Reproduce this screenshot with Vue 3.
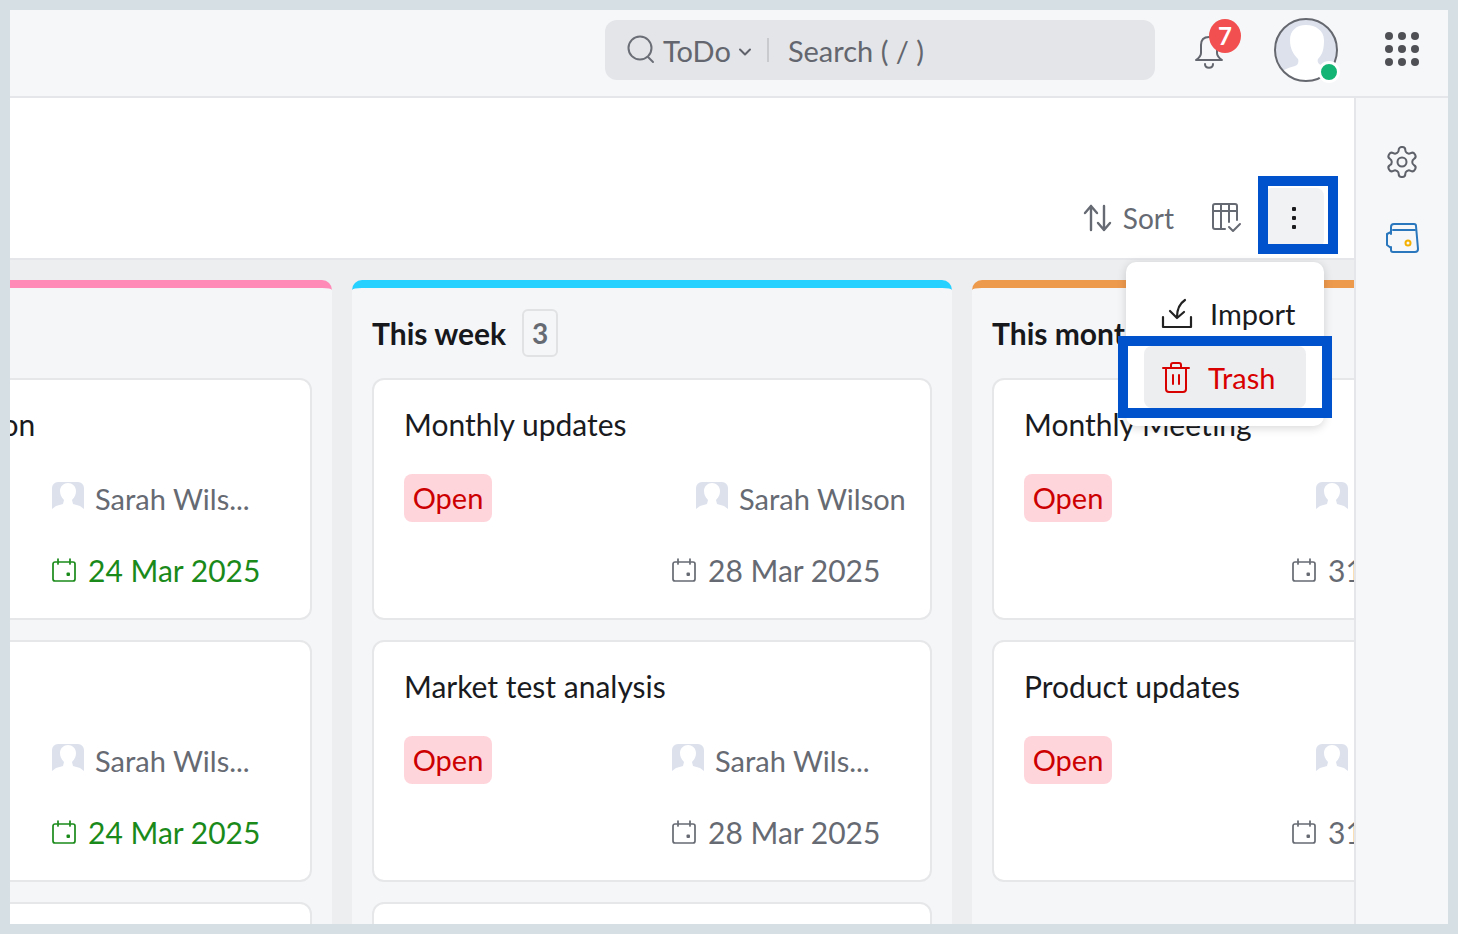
<script setup>
const columns = [
  { name: 'Today', count: 2, accent: '#ff8ab8', cards: [
    { title: 'Client presentation', user: 'Sarah Wils...', short: true, date: '24 Mar 2025', due: true },
    { title: 'Budget', user: 'Sarah Wils...', short: true, date: '24 Mar 2025', due: true },
    { title: '', user: '', date: '' } ] },
  { name: 'This week', count: 3, accent: '#26d0ff', cards: [
    { title: 'Monthly updates', user: 'Sarah Wilson', date: '28 Mar 2025' },
    { title: 'Market test analysis', user: 'Sarah Wils...', short: true, date: '28 Mar 2025' },
    { title: '', user: '', date: '' } ] },
  { name: 'This month', count: 2, accent: '#ee9a4d', cards: [
    { title: 'Monthly Meeting', user: 'Sarah Wilson', date: '31 Mar 2025' },
    { title: 'Product updates', user: 'Sarah Wilson', date: '31 Mar 2025' } ] }
]
const dots = [0, 1, 2, 3, 4, 5, 6, 7, 8]
</script>

<template>
  <div class="frame">
    <div class="app">
      <header class="topbar">
        <div class="search">
          <svg class="search-icon" width="30" height="30" viewBox="0 0 30 30" fill="none" stroke="#6b6e76" stroke-width="2" stroke-linecap="round">
            <circle cx="14" cy="13" r="11.5" /><path d="M22 22l5 5" />
          </svg>
          <span class="scope">ToDo</span>
          <svg class="chev" width="14" height="10" viewBox="0 0 14 10" fill="none" stroke="#5f626a" stroke-width="2" stroke-linecap="round" stroke-linejoin="round"><path d="M2 2.5l5 5 5-5" /></svg>
          <span class="divider"></span>
          <span class="placeholder">Search ( / )</span>
        </div>
        <div class="bell">
          <svg width="32" height="34" viewBox="0 0 32 34" fill="none" stroke="#63666e" stroke-width="2" stroke-linecap="round" stroke-linejoin="round">
            <path d="M7 10c0-5 3-8 8-8 5 0 8 3 8 8v8c0 3 2 5 5 7H2c3-2 5-4 5-7z" /><path d="M11 29c0 5 8 5 8 0" />
          </svg>
          <span class="badge">7</span>
        </div>
        <div class="avatar">
          <svg width="64" height="64" viewBox="0 0 64 64">
            <defs><clipPath id="avatar-clip"><circle cx="32" cy="32" r="31" /></clipPath></defs>
            <circle cx="32" cy="32" r="31" fill="#dce1ec" />
            <path clip-path="url(#avatar-clip)" fill="#fff" d="M32 7c-10 0-16 6-16 15 0 8 3 14 8 19 1 3 0 6-3 7-7 2-14 4-16 9v10h58V55c-3-4-10-6-16-8-3-1-4-4-3-6 5-5 6-11 6-19 0-9-8-15-18-15z" />
            <circle cx="32" cy="32" r="31" fill="none" stroke="#66686f" stroke-width="2" />
          </svg>
          <span class="online"></span>
        </div>
        <div class="apps"><i v-for="d in dots" :key="d"></i></div>
      </header>

      <div class="body">
        <main class="main">
          <div class="toolbar">
            <svg class="sort-icon" width="30" height="28" viewBox="0 0 30 28" fill="none" stroke="#666a72" stroke-width="2.4" stroke-linecap="round" stroke-linejoin="round">
              <path d="M8 26V2M2 9l6-7 6 7" /><path d="M21 2v24M15 19l6 7 6-7" />
            </svg>
            <span class="sort">Sort</span>
            <svg class="cols-icon" width="30" height="30" viewBox="0 0 30 30" fill="none" stroke="#666a72" stroke-width="2" stroke-linecap="round" stroke-linejoin="round">
              <path d="M13 26H3a2 2 0 0 1-2-2V3a2 2 0 0 1 2-2h20a2 2 0 0 1 2 2v14" /><path d="M1 8h24M9 1v25M17 1v18" /><path d="M17 24l4 4 7-7" />
            </svg>
            <button class="kebab"><i></i><i></i><i></i></button>
          </div>
          <div class="board">
            <section v-for="col in columns" :key="col.name" class="column" :style="{ borderTopColor: col.accent }">
              <div class="col-head">
                <span class="col-name">{{ col.name }}</span>
                <span class="col-count">{{ col.count }}</span>
              </div>
              <article v-for="(card, i) in col.cards" :key="i" class="card">
                <template v-if="card.title">
                  <h3 class="card-title">{{ card.title }}</h3>
                  <div class="meta">
                    <span class="pill">Open</span>
                    <div class="user" :class="{ wide: card.short }">
                      <svg width="32" height="28" viewBox="0 0 32 28">
                        <path fill="#dce1ec" d="M6 0h20a6 6 0 0 1 6 6v21l-4-3-7-2-1-4c3-3 4-6 4-9 0-5-4-8-8-8s-8 3-8 8c0 3 1 6 4 9l-1 4-7 2-4 3V6a6 6 0 0 1 6-6z" />
                      </svg>
                      <span>{{ card.user }}</span>
                    </div>
                    <div class="date" :class="{ due: card.due }">
                      <svg width="24" height="24" viewBox="0 0 24 24" fill="none" stroke="currentColor" stroke-width="1.7" stroke-linecap="round">
                        <path d="M5 4H3a2 2 0 0 0-2 2v15a2 2 0 0 0 2 2h18a2 2 0 0 0 2-2V6a2 2 0 0 0-2-2h-2" /><path d="M6 1v5M18 1v5M6 4h12" />
                        <rect x="14.5" y="14.5" width="3.5" height="3.5" rx="1" fill="currentColor" stroke="none" />
                      </svg>
                      <span>{{ card.date }}</span>
                    </div>
                  </div>
                </template>
              </article>
            </section>
          </div>
        </main>
        <aside class="side">
          <svg width="36" height="36" viewBox="0 0 24 24" fill="none" stroke="#5f626a" stroke-width="1.35" stroke-linecap="round" stroke-linejoin="round">
            <path d="M12.22 2h-.44a2 2 0 0 0-2 2v.18a2 2 0 0 1-1 1.73l-.43.25a2 2 0 0 1-2 0l-.15-.08a2 2 0 0 0-2.73.73l-.22.38a2 2 0 0 0 .73 2.73l.15.1a2 2 0 0 1 1 1.72v.51a2 2 0 0 1-1 1.74l-.15.09a2 2 0 0 0-.73 2.73l.22.38a2 2 0 0 0 2.73.73l.15-.08a2 2 0 0 1 2 0l.43.25a2 2 0 0 1 1 1.73V20a2 2 0 0 0 2 2h.44a2 2 0 0 0 2-2v-.18a2 2 0 0 1 1-1.73l.43-.25a2 2 0 0 1 2 0l.15.08a2 2 0 0 0 2.73-.73l.22-.39a2 2 0 0 0-.73-2.73l-.15-.08a2 2 0 0 1-1-1.74v-.5a2 2 0 0 1 1-1.74l.15-.09a2 2 0 0 0 .73-2.73l-.22-.38a2 2 0 0 0-2.73-.73l-.15.08a2 2 0 0 1-2 0l-.43-.25a2 2 0 0 1-1-1.73V4a2 2 0 0 0-2-2z" />
            <circle cx="12" cy="12" r="3" />
          </svg>
          <svg class="wallet" width="34" height="30" viewBox="0 0 34 30" fill="none" stroke="#2a77bd" stroke-width="2" stroke-linecap="round" stroke-linejoin="round">
            <path d="M6 11V4a3 3 0 0 1 3-3h20a2 2 0 0 1 2 2l2 23a3 3 0 0 1-3 3H8a2 2 0 0 1-2-2v-3" /><path d="M8 7h22" /><path d="M6 9L2 11v11l4 3" />
            <circle cx="23" cy="20" r="2.5" stroke="#f4b000" />
          </svg>
        </aside>
      </div>
    </div>

    <div class="menu">
      <div class="menu-item">
        <svg width="32" height="32" viewBox="0 0 32 32" fill="none" stroke="#222" stroke-width="2.2" stroke-linecap="round" stroke-linejoin="round">
          <path d="M2 20v10h28V20" /><path d="M16 20c0-7 2-13 8-17" /><path d="M9 14l7 7 7-6" />
        </svg>
        <span>Import</span>
      </div>
      <div class="menu-item trash">
        <svg width="28" height="32" viewBox="0 0 28 32" fill="none" stroke="#d90000" stroke-width="2" stroke-linecap="round" stroke-linejoin="round">
          <path d="M1 7h26M9 7V4a2 2 0 0 1 2-2h6a2 2 0 0 1 2 2v3" /><path d="M4 7v21a3 3 0 0 0 3 3h14a3 3 0 0 0 3-3V7" /><path d="M11 14v9M17 14v9" />
        </svg>
        <span>Trash</span>
      </div>
    </div>
    <div class="mark mark-kebab"></div>
    <div class="mark mark-trash"></div>
  </div>
</template>

<style>
html, body { margin: 0; }
</style>

<style scoped>
* { box-sizing: border-box; }
.frame { position: relative; width: 1458px; height: 934px; padding: 10px; background: #d6dfe4; font-family: Lato, "Liberation Sans", sans-serif; color: #1a1b1e; overflow: hidden; }
.app { width: 1438px; height: 914px; display: flex; flex-direction: column; background: #f6f7f9; overflow: hidden; }
.topbar { flex: 0 0 88px; display: flex; align-items: center; border-bottom: 2px solid #e4e6e9; }
.search { margin-left: 595px; width: 550px; height: 60px; margin-top: -6px; background: #e3e5e8; border-radius: 12px; display: flex; align-items: center; padding-left: 21px; color: #63666e; font-size: 29px; }
.search-icon { flex: none; }
.scope { margin-left: 7px; }
.chev { margin-left: 7px; margin-top: 3px; }
.divider { width: 2px; height: 24px; background: #c8cace; margin: 0 19px 0 15px; }
.bell { position: relative; margin-left: 39px; width: 32px; height: 34px; margin-top: -2px; }
.bell svg { display: block; }
.badge { position: absolute; left: 15px; top: -16px; width: 32px; height: 34px; border-radius: 50%; background: #f25050; color: #fff; font-size: 24px; font-weight: 700; text-align: center; line-height: 34px; }
.avatar { position: relative; margin-left: 48px; width: 64px; height: 64px; margin-top: -6px; }
.avatar svg { display: block; }
.online { position: absolute; right: -2px; bottom: -1px; width: 22px; height: 22px; border-radius: 50%; background: #14b574; border: 3px solid #fff; }
.apps { margin-left: 47px; width: 34px; margin-top: -8px; display: grid; grid-template-columns: repeat(3, 8px); gap: 5px; }
.apps i { width: 8px; height: 8px; border-radius: 50%; background: #4e5056; }
.body { flex: 1; min-height: 0; display: flex; }
.main { flex: 1; min-width: 0; display: flex; flex-direction: column; overflow: hidden; background: #eceef0; }
.toolbar { flex: 0 0 162px; background: #fff; border-bottom: 2px solid #e4e6e9; display: flex; justify-content: flex-end; align-items: flex-end; padding: 0 30px 10px 0; }
.sort-icon { margin-bottom: 16px; }
.sort { margin-left: 10px; margin-bottom: 13px; font-size: 28px; line-height: 34px; color: #666a72; }
.cols-icon { margin-left: 38px; margin-bottom: 15px; }
.kebab { margin-left: 22px; width: 60px; height: 60px; border: 0; border-radius: 8px; background: #f1f2f4; display: flex; flex-direction: column; align-items: center; justify-content: center; gap: 5px; padding: 0; }
.kebab i { width: 4px; height: 4px; background: #1c1c1f; border-radius: 1px; }
.board { flex: 1; min-height: 0; display: flex; gap: 20px; margin-left: -278px; padding-top: 20px; overflow: hidden; }
.column { flex: 0 0 600px; background: #f5f6f8; border-top: 8px solid; border-radius: 10px 10px 0 0; padding: 0 20px; }
.col-head { height: 90px; display: flex; align-items: center; margin-top: 0; }
.col-name { font-size: 30px; font-weight: 700; color: #17181b; }
.col-count { margin-left: 16px; width: 36px; height: 48px; border: 2px solid #e1e2e4; border-radius: 6px; font-size: 28px; font-weight: 700; color: #666a72; text-align: center; line-height: 44px; }
.card { height: 242px; background: #fff; border: 2px solid #e6e7e9; border-radius: 12px; padding: 24px 30px 0; margin-bottom: 20px; }
.card-title { margin: 0; font-size: 30px; font-weight: 400; line-height: 40px; color: #1a1b1e; white-space: nowrap; }
.meta { margin-top: 30px; display: grid; grid-template-columns: 1fr 228px; row-gap: 24px; }
.pill { justify-self: start; width: 88px; height: 48px; border-radius: 8px; background: #ffd5dc; color: #cc0000; font-size: 29px; line-height: 48px; text-align: center; }
.user { height: 48px; display: flex; align-items: center; gap: 11px; margin-left: 24px; font-size: 29px; color: #666a72; white-space: nowrap; }
.user.wide { margin-left: 0; }
.user svg { flex: none; margin-top: -4px; }
.date { grid-column: 2; height: 48px; display: flex; align-items: center; gap: 12px; font-size: 30px; color: #666a72; white-space: nowrap; }
.date svg { flex: none; }
.date.due { color: #1a8a1a; }
.side { flex: 0 0 94px; border-left: 2px solid #e4e6e9; display: flex; flex-direction: column; align-items: center; padding-top: 46px; }
.side .wallet { margin-top: 43px; }
.menu { position: absolute; left: 1126px; top: 262px; width: 198px; height: 164px; background: #fff; border-radius: 10px; box-shadow: 0 2px 10px rgba(0, 0, 0, 0.16); padding: 20px 18px 0; }
.menu-item { height: 62px; display: flex; align-items: center; gap: 17px; padding-left: 17px; font-size: 29px; color: #1a1b1e; border-radius: 8px; }
.trash { margin-top: 2px; background: #edeef0; color: #d90000; gap: 18px; padding-left: 18px; }
.mark { position: absolute; border: 10px solid #0052cc; }
.mark-kebab { left: 1258px; top: 176px; width: 80px; height: 78px; }
.mark-trash { left: 1118px; top: 336px; width: 214px; height: 82px; }
</style>
